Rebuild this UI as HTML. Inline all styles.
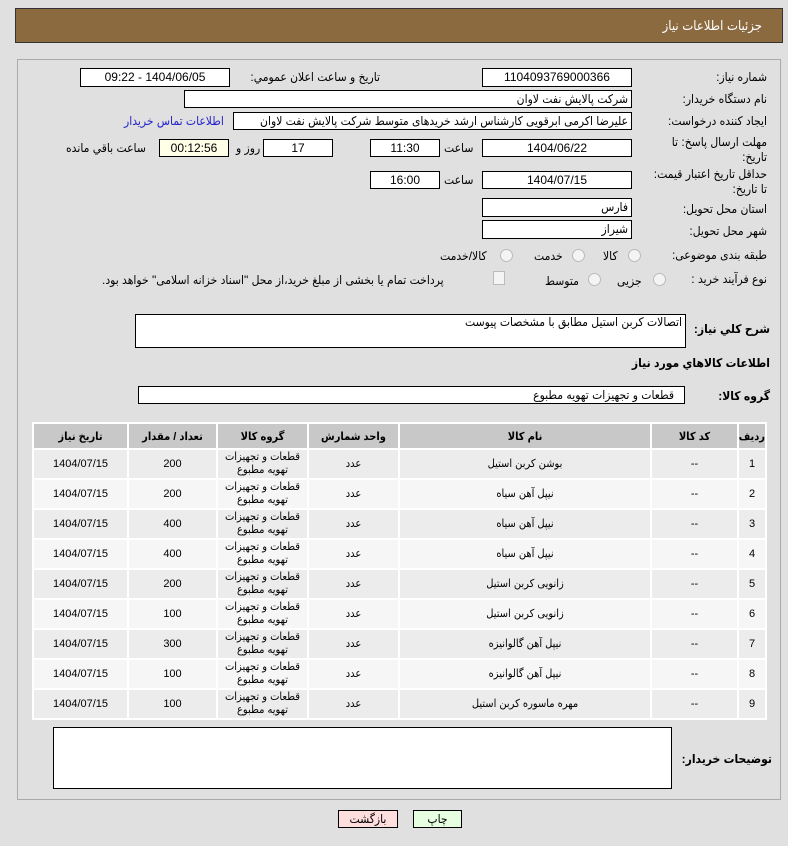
<!DOCTYPE html>
<html><head><meta charset="utf-8"><style>
body{margin:0;width:788px;height:846px;background:#e0e0e0;font-family:"Liberation Sans","DejaVu Sans Condensed","DejaVu Sans",sans-serif;font-size:12px;color:#000;position:relative;overflow:hidden;direction:rtl}
.a{position:absolute;white-space:nowrap}
.hdr{left:15px;top:8px;width:768px;height:35px;background:#8c6a40;border:1px solid #333;box-sizing:border-box}
.hdr span{position:absolute;right:20px;top:9px;color:#fff;font-size:13px}
.panel{left:17px;top:59px;width:764px;height:741px;border:1px solid #aaa;box-sizing:border-box}
.box{position:absolute;background:#fff;border:1px solid #000;box-sizing:border-box;text-align:center;font-size:12px;line-height:16px;white-space:nowrap;overflow:hidden}
.box.r{text-align:right;padding-right:3px}
.l{position:absolute;white-space:nowrap;font-size:12px}
table{position:absolute;left:32px;top:422px;width:735px;border-collapse:separate;border-spacing:2px;background:#fff;font-size:11px;text-align:center;table-layout:fixed}
th{background:#c8c8c8;height:24px;font-weight:bold;padding:0;white-space:nowrap}
td{height:28px;line-height:13px;padding:0;white-space:nowrap;overflow:hidden}
tr:nth-child(odd) td{background:#f6f6f6}
tr:nth-child(even) td{background:#ececec}
.rad{position:absolute;width:11px;height:11px;border:1px solid #bbb;border-radius:50%;background:#f4f4f4}
.btn{position:absolute;height:18px;border:1px solid #000;box-sizing:border-box;text-align:center;font-size:12px;line-height:16px}
</style></head><body>
<div class="a hdr"><span>جزئیات اطلاعات نیاز</span></div>
<div class="a panel"></div>

<div class="l" style="right:21px;top:70px">شماره نیاز:</div>
<div class="box" style="left:482px;top:68px;width:150px;height:19px">1104093769000366</div>
<div class="l" style="right:408px;top:70px">تاریخ و ساعت اعلان عمومي:</div>
<div class="box" style="left:80px;top:68px;width:150px;height:19px">1404/06/05 - 09:22</div>

<div class="l" style="right:21px;top:92px">نام دستگاه خریدار:</div>
<div class="box r" style="left:184px;top:90px;width:448px;height:18px">شرکت پالایش نفت لاوان</div>

<div class="l" style="right:21px;top:114px">ایجاد کننده درخواست:</div>
<div class="box r" style="left:233px;top:112px;width:399px;height:18px">علیرضا اکرمی ابرقویی کارشناس ارشد خریدهای متوسط شرکت پالایش نفت لاوان</div>
<div class="l" style="left:124px;top:114px;color:#2222cc">اطلاعات تماس خریدار</div>

<div class="l" style="right:21px;top:135px">مهلت ارسال پاسخ: تا</div>
<div class="l" style="right:21px;top:150px">تاریخ:</div>
<div class="box" style="left:482px;top:139px;width:150px;height:18px">1404/06/22</div>
<div class="l" style="left:444px;top:141px">ساعت</div>
<div class="box" style="left:370px;top:139px;width:70px;height:18px">11:30</div>
<div class="box" style="left:263px;top:139px;width:70px;height:18px">17</div>
<div class="l" style="left:236px;top:141px">روز و</div>
<div class="box" style="left:159px;top:139px;width:70px;height:18px;background:#ffffe8">00:12:56</div>
<div class="l" style="left:66px;top:141px">ساعت باقي مانده</div>

<div class="l" style="right:21px;top:167px">حداقل تاریخ اعتبار قیمت:</div>
<div class="l" style="right:21px;top:182px">تا تاریخ:</div>
<div class="box" style="left:482px;top:171px;width:150px;height:18px">1404/07/15</div>
<div class="l" style="left:444px;top:173px">ساعت</div>
<div class="box" style="left:370px;top:171px;width:70px;height:18px">16:00</div>

<div class="l" style="right:21px;top:202px">استان محل تحویل:</div>
<div class="box r" style="left:482px;top:198px;width:150px;height:19px">فارس</div>
<div class="l" style="right:21px;top:224px">شهر محل تحویل:</div>
<div class="box r" style="left:482px;top:220px;width:150px;height:19px">شیراز</div>

<div class="l" style="right:21px;top:248px">طبقه بندی موضوعی:</div>
<div class="rad" style="left:628px;top:249px"></div><div class="l" style="left:603px;top:249px">کالا</div>
<div class="rad" style="left:572px;top:249px"></div><div class="l" style="left:534px;top:249px">خدمت</div>
<div class="rad" style="left:500px;top:249px"></div><div class="l" style="left:440px;top:249px">کالا/خدمت</div>

<div class="l" style="right:21px;top:272px">نوع فرآیند خرید :</div>
<div class="rad" style="left:653px;top:273px"></div><div class="l" style="left:617px;top:274px">جزیی</div>
<div class="rad" style="left:588px;top:273px"></div><div class="l" style="left:545px;top:274px">متوسط</div>
<div class="a" style="left:493px;top:271px;width:10px;height:12px;border:1px solid #bbb;background:#f4f4f4"></div>
<div class="l" style="left:102px;top:273px">پرداخت تمام یا بخشی از مبلغ خرید،از محل "اسناد خزانه اسلامی" خواهد بود.</div>

<div class="l" style="right:18px;top:322px;font-weight:bold">شرح کلي نیاز:</div>
<div class="box r" style="left:135px;top:314px;width:551px;height:34px;line-height:15px">اتصالات کربن استیل مطابق با مشخصات پیوست</div>
<div class="l" style="right:18px;top:356px;font-weight:bold">اطلاعات کالاهاي مورد نیاز</div>
<div class="l" style="right:18px;top:389px;font-weight:bold">گروه کالا:</div>
<div class="box r" style="left:138px;top:386px;width:547px;height:18px;padding-right:10px">قطعات و تجهیزات تهویه مطبوع</div>

<table>
<colgroup><col style="width:26px"><col style="width:85px"><col><col style="width:89px"><col style="width:89px"><col style="width:87px"><col style="width:93px"></colgroup>
<tr><th>ردیف</th><th>کد کالا</th><th>نام کالا</th><th>واحد شمارش</th><th>گروه کالا</th><th>تعداد / مقدار</th><th>تاریخ نیاز</th></tr>
<tr><td>1</td><td>--</td><td>بوشن کربن استیل</td><td>عدد</td><td>قطعات و تجهیزات<br>تهویه مطبوع</td><td>200</td><td>1404/07/15</td></tr>
<tr><td>2</td><td>--</td><td>نیپل آهن سیاه</td><td>عدد</td><td>قطعات و تجهیزات<br>تهویه مطبوع</td><td>200</td><td>1404/07/15</td></tr>
<tr><td>3</td><td>--</td><td>نیپل آهن سیاه</td><td>عدد</td><td>قطعات و تجهیزات<br>تهویه مطبوع</td><td>400</td><td>1404/07/15</td></tr>
<tr><td>4</td><td>--</td><td>نیپل آهن سیاه</td><td>عدد</td><td>قطعات و تجهیزات<br>تهویه مطبوع</td><td>400</td><td>1404/07/15</td></tr>
<tr><td>5</td><td>--</td><td>زانویی کربن استیل</td><td>عدد</td><td>قطعات و تجهیزات<br>تهویه مطبوع</td><td>200</td><td>1404/07/15</td></tr>
<tr><td>6</td><td>--</td><td>زانویی کربن استیل</td><td>عدد</td><td>قطعات و تجهیزات<br>تهویه مطبوع</td><td>100</td><td>1404/07/15</td></tr>
<tr><td>7</td><td>--</td><td>نیپل آهن گالوانیزه</td><td>عدد</td><td>قطعات و تجهیزات<br>تهویه مطبوع</td><td>300</td><td>1404/07/15</td></tr>
<tr><td>8</td><td>--</td><td>نیپل آهن گالوانیزه</td><td>عدد</td><td>قطعات و تجهیزات<br>تهویه مطبوع</td><td>100</td><td>1404/07/15</td></tr>
<tr><td>9</td><td>--</td><td>مهره ماسوره کربن استیل</td><td>عدد</td><td>قطعات و تجهیزات<br>تهویه مطبوع</td><td>100</td><td>1404/07/15</td></tr>
</table>

<div class="l" style="right:16px;top:752px;font-weight:bold">توضیحات خریدار:</div>
<div class="box" style="left:53px;top:727px;width:619px;height:62px"></div>

<div class="btn" style="left:338px;top:810px;width:60px;background:#ffdede">بازگشت</div>
<div class="btn" style="left:413px;top:810px;width:49px;background:#e6ffe0">چاپ</div>
</body></html>
